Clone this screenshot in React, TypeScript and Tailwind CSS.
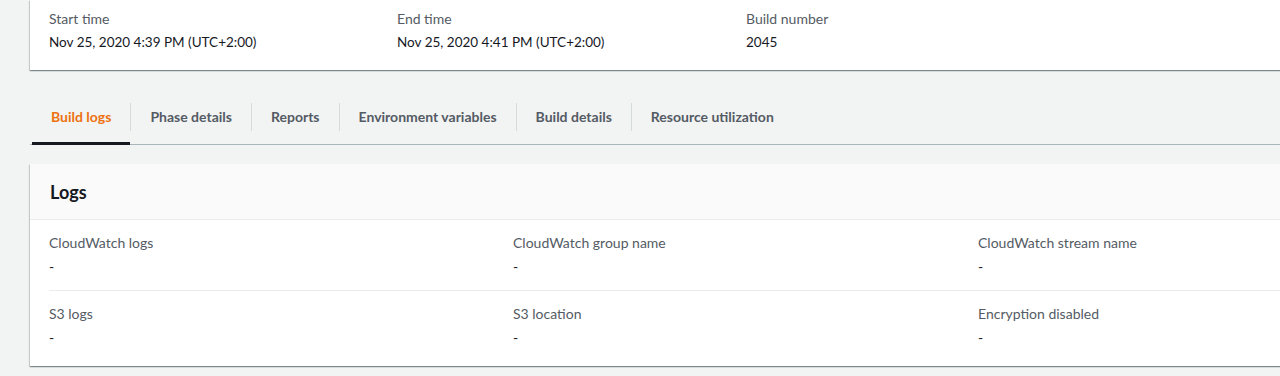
import React from 'react';

const font = { fontFamily: 'Lato, "Noto Sans", Arial, sans-serif' };

const summary = [
  { label: 'Start time', value: 'Nov 25, 2020 4:39 PM (UTC+2:00)' },
  { label: 'End time', value: 'Nov 25, 2020 4:41 PM (UTC+2:00)' },
  { label: 'Build number', value: '2045' },
  { label: '', value: '' },
];

const tabs = [
  'Build logs',
  'Phase details',
  'Reports',
  'Environment variables',
  'Build details',
  'Resource utilization',
];

const logRows = [
  [
    { label: 'CloudWatch logs', value: '-' },
    { label: 'CloudWatch group name', value: '-' },
    { label: 'CloudWatch stream name', value: '-' },
  ],
  [
    { label: 'S3 logs', value: '-' },
    { label: 'S3 location', value: '-' },
    { label: 'Encryption disabled', value: '-' },
  ],
];

const cardShadow =
  'shadow-[0_1px_1px_0_rgba(0,28,36,0.3),1px_1px_1px_0_rgba(0,28,36,0.15),-1px_1px_1px_0_rgba(0,28,36,0.15)]';

export default function App() {
  return (
    <div className="w-[1280px] h-[376px] overflow-hidden bg-[#f2f3f3] text-[14px]" style={font}>
      <div className="pl-[30px]">
        {/* Summary card */}
        <div
          className={
            'w-[1434px] h-[70px] bg-white px-[19px] pt-[8px] grid grid-cols-[348px_349px_349px_349px] ' +
            cardShadow
          }
        >
          {summary.map((item, i) => (
            <div key={i}>
              <div className="text-[#545b64] leading-[22px]">{item.label}</div>
              <div className="text-[#16191f] text-[13.5px] leading-[22px] mt-[1px]">{item.value}</div>
            </div>
          ))}
        </div>

        {/* Tabs */}
        <div className="mt-[28px] w-[1400px] flex items-start border-b border-[#aab7b8]">
          <div className="ml-[2px] flex items-start">
            {tabs.map((t, i) => (
              <div key={t} className="flex items-start">
                {i > 0 && <div className="w-px h-[28px] mt-[5px] bg-[#d5dbdb]" />}
                <div
                  className={
                    'px-[19px] pt-[9px] pb-[15px] leading-[20px] font-bold border-b-[3px] -mb-px ' +
                    (i === 0 ? 'text-[#ec7211] border-[#16191f]' : 'text-[#545b64] border-transparent')
                  }
                >
                  {t}
                </div>
              </div>
            ))}
          </div>
        </div>

        {/* Logs card */}
        <div className={'mt-[19px] w-[1434px] bg-white pb-[5px] ' + cardShadow}>
          <div className="h-[56px] bg-[#fafafa] border-b border-[#eaeded] px-[20px] pt-[1px] flex items-center">
            <h2 className="text-[18px] font-bold text-[#16191f]">Logs</h2>
          </div>
          <div className="px-[19px]">
            {logRows.map((row, r) => (
              <div
                key={r}
                className={
                  'grid grid-cols-[464px_465px_465px] pt-[12px] pb-[12px] ' +
                  (r === 0 ? 'border-b border-[#eaeded]' : '')
                }
              >
                {row.map((item) => (
                  <div key={item.label}>
                    <div className="text-[#545b64] leading-[22px]">{item.label}</div>
                    <div className="text-[#16191f] leading-[22px] mt-[2px]">{item.value}</div>
                  </div>
                ))}
              </div>
            ))}
          </div>
        </div>
      </div>
    </div>
  );
}
